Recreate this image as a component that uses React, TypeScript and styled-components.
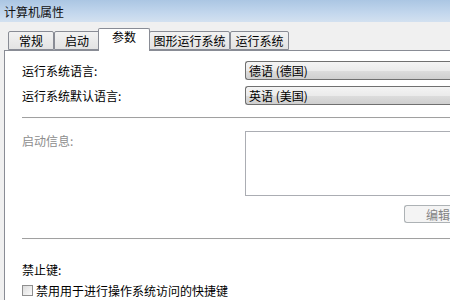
import styled, { createGlobalStyle } from "styled-components";

const GlobalStyle = createGlobalStyle`
  html, body {
    margin: 0;
    padding: 0;
    background: #f0f0f0;
    overflow: hidden;
  }
  body {
    font-family: "Noto Sans CJK SC", "Liberation Sans", sans-serif;
    font-size: 12px;
    color: #000;
  }
`;

const Window = styled.div`
  width: 450px;
  height: 300px;
  display: flex;
  flex-direction: column;
  background: #f0f0f0;
  overflow: hidden;
`;

const TitleBar = styled.div`
  height: 22px;
  display: flex;
  align-items: center;
  padding-left: 4px;
  background: linear-gradient(to bottom, #abc6e3 0%, #c3d7ed 60%, #d3e1f0 100%);
  font-size: 12px;
  color: #111;
`;

const Body = styled.div`
  flex: 1;
  display: flex;
  flex-direction: column;
  padding: 5px 0 0 4px;
  background: #f0f0f0;
`;

const TabRow = styled.div`
  display: flex;
  align-items: flex-end;
  height: 23px;
  padding-left: 4px;
`;

const Tab = styled.div<{ $active?: boolean; $w: number }>`
  width: ${(p) => p.$w}px;
  height: ${(p) => (p.$active ? 23 : 19)}px;
  box-sizing: border-box;
  display: flex;
  align-items: ${(p) => (p.$active ? "flex-start" : "center")};
  justify-content: center;
  padding-top: ${(p) => (p.$active ? 2 : 0)}px;
  margin: ${(p) => (p.$active ? "0 -1px -1px -2px" : "0")};
  position: relative;
  z-index: ${(p) => (p.$active ? 2 : 1)};
  border: 1px solid #898c95;
  border-bottom: ${(p) => (p.$active ? "none" : "1px solid #898c95")};
  border-radius: 2px 2px 0 0;
  background: ${(p) =>
    p.$active ? "#ffffff" : "linear-gradient(to bottom, #f2f2f2, #e3e3e3)"};
  font-size: 12px;
  line-height: 1;
`;

const Panel = styled.div`
  flex: 1;
  background: #ffffff;
  border-left: 1px solid #898c95;
  border-top: 1px solid #898c95;
  display: flex;
  flex-direction: column;
  padding: 10px 0 0 17px;
`;

const FieldRow = styled.div`
  display: grid;
  grid-template-columns: 223px 1fr;
  align-items: center;
  height: 19px;
  margin-bottom: 6px;
`;

const Label = styled.span<{ $disabled?: boolean }>`
  color: ${(p) => (p.$disabled ? "#8d8d8d" : "#000")};
  font-size: 12px;
`;

const Select = styled.div`
  height: 19px;
  box-sizing: border-box;
  border: 1px solid #707070;
  border-right: none;
  border-radius: 3px 0 0 3px;
  background: linear-gradient(to bottom, #f4f4f4 0%, #ebebeb 50%, #dddddd 51%, #cfcfcf 100%);
  padding-left: 3px;
  display: flex;
  align-items: center;
  font-size: 12px;
`;

const Separator = styled.div<{ $top: number; $bottom: number }>`
  height: 1px;
  background: #a0a0a0;
  border-bottom: 1px solid #fdfdfd;
  margin: ${(p) => p.$top}px 0 ${(p) => p.$bottom}px;
`;

const InfoRow = styled.div`
  display: grid;
  grid-template-columns: 223px 1fr;
  align-items: start;
`;

const InfoLabel = styled(Label)`
  padding-top: 1px;
`;

const TextBox = styled.div`
  height: 65px;
  box-sizing: border-box;
  border: 1px solid #abadb3;
  border-right: none;
  background: #ffffff;
`;

const ButtonRow = styled.div`
  display: flex;
  justify-content: flex-end;
  margin-top: 9px;
`;

const Button = styled.div`
  width: 46px;
  height: 18px;
  box-sizing: border-box;
  border: 1px solid #adb2b5;
  border-right: none;
  border-radius: 3px 0 0 3px;
  background: #f4f4f4;
  color: #838383;
  font-size: 12px;
  display: flex;
  align-items: center;
  justify-content: flex-end;
  white-space: nowrap;
  overflow: hidden;
`;

const Heading = styled(Label)`
  margin-top: 21px;
`;

const CheckRow = styled.div`
  display: flex;
  align-items: center;
  gap: 3px;
  margin-top: 4px;
`;

const CheckBox = styled.span`
  width: 11px;
  height: 11px;
  box-sizing: border-box;
  border: 1px solid #8f8f8f;
  background: linear-gradient(135deg, #dcdcdc, #fbfbfb);
  display: inline-block;
`;

const tabs = [
  { label: "常规", w: 46 },
  { label: "启动", w: 46 },
  { label: "参数", w: 52, active: true },
  { label: "图形运行系统", w: 81 },
  { label: "运行系统", w: 59 },
];

export default function App() {
  return (
    <Window>
      <GlobalStyle />
      <TitleBar>计算机属性</TitleBar>
      <Body>
        <TabRow>
          {tabs.map((t) => (
            <Tab key={t.label} $w={t.w} $active={t.active}>
              {t.label}
            </Tab>
          ))}
        </TabRow>
        <Panel>
          <FieldRow>
            <Label>运行系统语言:</Label>
            <Select>德语 (德国)</Select>
          </FieldRow>
          <FieldRow>
            <Label>运行系统默认语言:</Label>
            <Select>英语 (美国)</Select>
          </FieldRow>
          <Separator $top={6} $bottom={12} />
          <InfoRow>
            <InfoLabel $disabled>启动信息:</InfoLabel>
            <TextBox />
          </InfoRow>
          <ButtonRow>
            <Button>编辑</Button>
          </ButtonRow>
          <Separator $top={15} $bottom={0} />
          <Heading>禁止键:</Heading>
          <CheckRow>
            <CheckBox />
            <Label>禁用用于进行操作系统访问的快捷键</Label>
          </CheckRow>
        </Panel>
      </Body>
    </Window>
  );
}
